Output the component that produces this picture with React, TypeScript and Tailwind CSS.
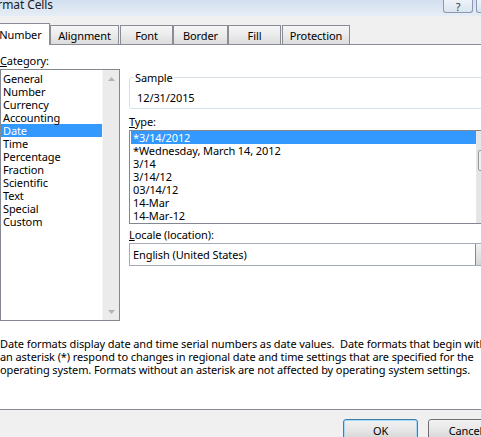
const CATEGORIES = [
  "General",
  "Number",
  "Currency",
  "Accounting",
  "Date",
  "Time",
  "Percentage",
  "Fraction",
  "Scientific",
  "Text",
  "Special",
  "Custom",
]

const TYPES = [
  "*3/14/2012",
  "*Wednesday, March 14, 2012",
  "3/14",
  "3/14/12",
  "03/14/12",
  "14-Mar",
  "14-Mar-12",
]

const Arrow = ({ up, color }: { up?: boolean; color: string }) => (
  <svg width="7" height="4" viewBox="0 0 7 4">
    <path d={up ? "M0 4 L3.5 0 L7 4 Z" : "M0 0 L3.5 4 L7 0 Z"} fill={color} />
  </svg>
)

// scrollbar with nothing to scroll: greyed arrows, no thumb
const DisabledScroll = () => (
  <div className="w-[17px] flex flex-col justify-between bg-[#ebebeb] border-l border-[#f6f6f6]">
    <div className="h-[17px] flex items-center justify-center">
      <Arrow up color="#b4b4b4" />
    </div>
    <div className="h-[17px] flex items-center justify-center">
      <Arrow color="#b4b4b4" />
    </div>
  </div>
)

const Scroll = () => (
  <div className="w-[17px] flex flex-col bg-linear-to-r from-[#e3e3e3] to-[#f1f1f1] border-l border-[#e8e8e8]">
    <div className="h-[17px] flex items-center justify-center">
      <Arrow up color="#606060" />
    </div>
    <div className="mt-[2px] h-[21px] mx-[1px] rounded-[2px] border border-[#979797] bg-linear-to-r from-[#f2f2f2] to-[#dcdcdc] flex flex-col items-center justify-center gap-[2px]">
      <div className="w-[6px] h-px bg-[#7a7a7a]" />
      <div className="w-[6px] h-px bg-[#7a7a7a]" />
      <div className="w-[6px] h-px bg-[#7a7a7a]" />
    </div>
    <div className="flex-1" />
    <div className="h-[17px] flex items-center justify-center">
      <Arrow color="#606060" />
    </div>
  </div>
)

const Tab = ({ label, w, ml }: { label: string; w: string; ml: string }) => (
  <div
    className={`${w} ${ml} h-[19px] mb-[1px] flex items-center justify-center border border-b-0 border-[#898c95] bg-linear-to-b from-[#f6f6f6] via-[#ebebeb] to-[#dcdcdc]`}
  >
    {label}
  </div>
)

const Button = ({ label, primary }: { label: string; primary?: boolean }) => (
  <div
    className={`w-[75px] h-[23px] rounded-[3px] border flex items-center justify-center bg-linear-to-b from-[#f2f2f2] via-[#e6e6e6] to-[#d0d0d0] ${
      primary ? "border-[#3c7fb1] shadow-[inset_0_0_0_1px_#a7d8f5]" : "border-[#707070]"
    }`}
  >
    {label}
  </div>
)

export default function App() {
  return (
    <div className="w-[481px] h-[437px] overflow-hidden bg-[#f0f0f0] text-[11px] leading-[13px] tracking-[-0.1px] text-black font-['Noto_Sans',sans-serif]">
      <div className="ml-[-10px] w-[532px]">
        {/* title bar */}
        <div className="h-[16px] flex items-start bg-linear-to-b from-[#d4e0ef] to-[#e6edf6]">
          <span className="ml-[-6px] mt-[-2px] text-[12px] leading-[14px] text-[#1a1a1a]">Format Cells</span>
          <div className="ml-auto mr-[3px] flex gap-[3px]">
            <div className="w-[30px] h-[13px] border border-t-0 border-[#8a99ae] rounded-b-[3px] bg-linear-to-b from-[#eef3f9] to-[#dbe4ef] flex items-center justify-center text-[11px] leading-none text-[#3a3a3a]">
              ?
            </div>
            <div className="w-[43px] h-[13px] border border-t-0 border-[#8a99ae] rounded-b-[3px] bg-linear-to-b from-[#eef3f9] to-[#dbe4ef]" />
          </div>
        </div>

        {/* tabs */}
        <div className="h-[29px] -mb-px relative z-10 flex items-end pl-px">
          <div className="w-[59px] h-[22px] flex items-center justify-center bg-white border border-b-0 border-[#898c95]">
            Number
          </div>
          <Tab label="Alignment" w="w-[69px]" ml="ml-0" />
          <Tab label="Font" w="w-[53px]" ml="ml-px" />
          <Tab label="Border" w="w-[55px]" ml="ml-0" />
          <Tab label="Fill" w="w-[53px]" ml="ml-0" />
          <Tab label="Protection" w="w-[68px]" ml="ml-px" />
        </div>

        {/* panel */}
        <div className="h-[366px] bg-white border-y border-[#898c95] px-[10px] pt-[9px]">
          <div className="flex gap-[9px]">
            <div className="w-[120px] flex flex-col">
              <div className="h-[13px]">
                <span className="underline underline-offset-[1px]">C</span>ategory:
              </div>
              <div className="mt-[2px] h-[252px] border border-[#828790] flex">
                <div className="flex-1 pt-[2px]">
                  {CATEGORIES.map((c) => (
                    <div key={c} className={`h-[13px] px-[2px] ${c === "Date" ? "bg-[#3399ff] text-white" : ""}`}>
                      {c}
                    </div>
                  ))}
                </div>
                <DisabledScroll />
              </div>
            </div>

            <div className="w-[365px] flex flex-col pt-[17px]">
              <fieldset className="border border-[#d5dfe5] rounded-[3px] px-[7px] pt-[7px] pb-[4px]">
                <legend className="-ml-[3px] px-px">Sample</legend>
                <div className="h-[13px]">12/31/2015</div>
              </fieldset>

              <div className="mt-[6px] h-[13px]">
                <span className="underline underline-offset-[1px]">T</span>ype:
              </div>
              <div className="mt-[2px] h-[94px] border border-[#828790] flex">
                <div className="flex-1 pl-px">
                  {TYPES.map((t, i) => (
                    <div key={t} className={`h-[13px] px-[2px] ${i === 0 ? "bg-[#3399ff] text-white" : ""}`}>
                      {t}
                    </div>
                  ))}
                </div>
                <Scroll />
              </div>

              <div className="mt-[4px] h-[13px]">
                <span className="underline underline-offset-[1px]">L</span>ocale (location):
              </div>
              <div className="mt-[2px] h-[23px] border border-[#a5acb5] flex bg-white">
                <div className="flex-1 pl-[3px] flex items-center">English (United States)</div>
                <div className="w-[18px] border-l border-[#8a8a8a] bg-linear-to-b from-[#f2f2f2] to-[#d6d6d6] flex items-center justify-center">
                  <Arrow color="#404040" />
                </div>
              </div>
            </div>
          </div>

          <div className="mt-[16px] whitespace-pre">
            {"Date formats display date and time serial numbers as date values.  Date formats that begin with\n"}
            {"an asterisk (*) respond to changes in regional date and time settings that are specified for the\n"}
            {"operating system. Formats without an asterisk are not affected by operating system settings."}
          </div>
        </div>

        {/* buttons */}
        <div className="flex justify-end gap-[10px] pr-[19px] pt-[9px]">
          <Button label="OK" primary />
          <Button label="Cancel" />
        </div>
      </div>
    </div>
  )
}
